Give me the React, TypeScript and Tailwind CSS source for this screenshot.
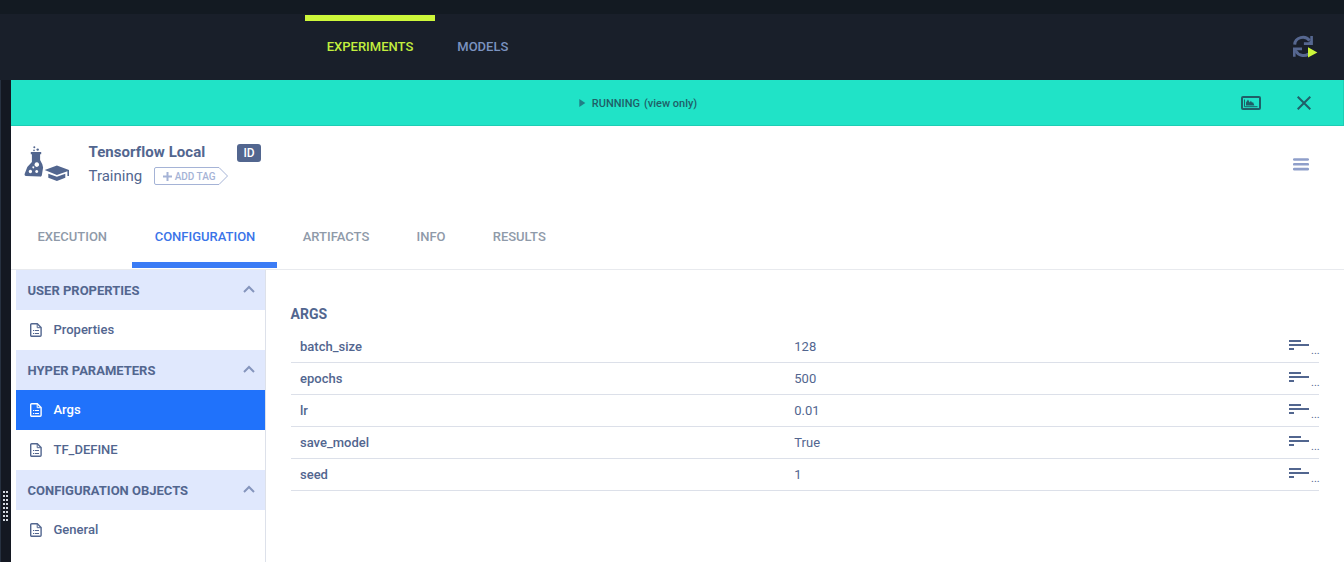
import React from "react";

type IconProps = { className?: string };

function RefreshIcon() {
  return (
    <svg width="26" height="24" viewBox="0 0 26 24" fill="none">
      <path d="M2.7 10.600A8.200 7.600 0 0 1 17.600 6.600" stroke="#566790" strokeWidth="3" />
      <path d="M20.900 2v9h-9V8.300h4.700l1.700-1.600V2z" fill="#566790" />
      <path d="M4 17.200A8.200 7.400 0 0 0 16.500 20" stroke="#566790" strokeWidth="3" />
      <path d="M1 22.800V13.500h9v2.700H5.300l-1.700 1.700v4.900z" fill="#566790" />
      <path d="M16 13.300v10.200l9.400-5.100z" fill="#cdf73a" />
    </svg>
  );
}

function PreviewIcon() {
  return (
    <svg width="20" height="14" viewBox="0 0 20 14" fill="none">
      <rect x="1" y="1" width="18" height="12" rx="1" stroke="#1f5f68" strokeWidth="2" />
      <path d="M3.5 3.5v7.2h13" stroke="#1f5f68" />
      <path d="M5 9.4V6.6l2-3.100 1.700 3.100 1.200-1.900 1.200 2 .9-.8 1.400 3.500z" fill="#1f5f68" />
    </svg>
  );
}

function ExperimentIcon() {
  return (
    <svg width="46" height="36" viewBox="0 0 46 36" fill="#52668f">
      <circle cx="10.300" cy="1.300" r="1" />
      <circle cx="13.700" cy="3.600" r="1.200" />
      <circle cx="10" cy="4.400" r=".8" />
      <path
        fillRule="evenodd"
        d="M6.800 6h10.400v2.300h-1.100v5.700l2.200 4.200.8 3.400-1.200 7.400c-.3 1.300-1 1.800-2.200 1.600L2 29.900C.8 29.800.3 28.900.7 27.700L3.300 21l4.600-5V8.300H6.800zM12.800 16.300a2.300 2.300 0 1 0 .01 0zM6.400 23.800a1.700 1.700 0 1 0 .01 0zM12.700 24.100a1.500 1.500 0 1 0 .01 0zM9.300 20.300a1 1 0 1 0 .01 0z"
      />
      <path d="M20.700 24 32.900 19.600 45 24V30h-1.600v-4.800l-10.500 3.700z" />
      <path d="M24.300 27.700l8.600 3 8.400-3v4.100l-8.400 3.100-8.600-3.100z" />
    </svg>
  );
}

function FileIcon({ className }: IconProps) {
  return (
    <svg className={className} width="12" height="14" viewBox="0 0 12 14" fill="none" stroke="currentColor">
      <path d="M1.700.7h5.600l3.800 3.800v7.800a1 1 0 0 1-1 1H1.700a1 1 0 0 1-1-1V1.700a1 1 0 0 1 1-1z" strokeWidth="1.400" />
      <path d="M7.200 1v3.700h3.700" />
      <path d="M3 7.500h1.300M5 7.500h4M3 10.500h1.300M5 10.500h4" strokeWidth="1.200" />
    </svg>
  );
}

const groups = [
  { title: "USER PROPERTIES", items: ["Properties"] },
  { title: "HYPER PARAMETERS", items: ["Args", "TF_DEFINE"] },
  { title: "CONFIGURATION OBJECTS", items: ["General"] },
];

const args = [
  ["batch_size", "128"],
  ["epochs", "500"],
  ["lr", "0.01"],
  ["save_model", "True"],
  ["seed", "1"],
];

function TopNav() {
  return (
    <header className="flex h-20 shrink-0 flex-col bg-[#191f2a]">
      <div className="h-3.5 shrink-0 bg-[#131a22]" />
      <div className="flex flex-1 items-start pt-px text-[13px] font-medium">
        <div className="ml-[305px] h-[65px] w-[130px] border-t-6 border-[#cdf73a] pt-4 text-center leading-[20px] text-[#c3ee3e]">
          EXPERIMENTS
        </div>
        <div className="ml-[22.300px] pt-[22px] leading-[20px] text-[#7b93c0]">MODELS</div>
        <div className="mr-[26px] ml-auto pt-[19px]">
          <RefreshIcon />
        </div>
      </div>
    </header>
  );
}

function StatusBar() {
  return (
    <div className="flex h-[46px] shrink-0 items-center border-r border-b border-[#1dcdb4] bg-[#20e3c7] text-[#1f5f68]">
      <svg className="ml-[568px]" width="7" height="8" viewBox="0 0 7 8" fill="#217f86">
        <path d="M.3 0 6.300 4 .3 8z" />
      </svg>
      <div className="mt-[3px] ml-[5.800px] flex gap-1 text-[11px] leading-[16px] font-medium">
        <span>RUNNING</span>
        <span>(view only)</span>
      </div>
      <div className="mr-[32.500px] ml-auto flex items-center gap-[36px]">
        <PreviewIcon />
        <svg width="14" height="14" viewBox="0 0 14 14" stroke="#1f5f68" strokeWidth="2">
          <path d="M.7.700 13.300 13.300M13.300.700.7 13.300" />
        </svg>
      </div>
    </div>
  );
}

function ExperimentHeader() {
  return (
    <div className="flex h-[79px] shrink-0 items-start text-[#52668f]">
      <div className="mt-[20px] ml-[13px]">
        <ExperimentIcon />
      </div>
      <div className="mt-[14px] ml-[18.500px]">
        <div className="flex h-6 items-center">
          <span className="w-[116px] text-[15px] font-bold tracking-[0.06px] whitespace-nowrap">Tensorflow Local</span>
          <span className="mt-[2px] ml-[32.500px] flex h-[18px] w-6 items-center justify-center rounded-[3px] bg-[#52668f] text-[12px] leading-[18px] font-medium text-white">
            ID
          </span>
        </div>
        <div className="flex h-6 items-center">
          <span className="text-[15px]">Training</span>
          <div className="relative ml-[12px] flex h-[18px] w-[75px] items-center text-[#a5b3d6]">
            <svg className="absolute inset-0" width="75" height="18" viewBox="0 0 75 18" fill="none" stroke="currentColor">
              <path d="M2 .500h63L73.500 9 65 17.500H2A1.500 1.500 0 0 1 .500 16V2A1.500 1.500 0 0 1 2 .500z" />
            </svg>
            <svg className="ml-[9px]" width="9" height="9" viewBox="0 0 9 9" stroke="currentColor" strokeWidth="2">
              <path d="M4.500 0v9M0 4.500h9" />
            </svg>
            <span className="ml-[2.500px] text-[10px] font-medium whitespace-nowrap">ADD TAG</span>
          </div>
        </div>
      </div>
      <svg className="mt-[32px] mr-[35px] ml-auto" width="16" height="13" viewBox="0 0 16 13" stroke="#8f9fca" strokeWidth="2.600" strokeLinecap="round">
        <path d="M1.200 1.500h13.600M1.200 6.300h13.600M1.200 11.100h13.600" />
      </svg>
    </div>
  );
}

function Tabs() {
  const base = "flex h-[63px] items-center justify-center border-b-6 pt-[6px]";
  return (
    <nav className="flex h-[65px] shrink-0 border-b border-[#e8eaee] text-[13px] font-medium text-[#8f9aa9]">
      <div className={`${base} ml-[5px] w-[112px] border-transparent pl-[0.500px]`}>EXECUTION</div>
      <div className={`${base} ml-[4px] w-[145px] border-[#3b7cf5] pl-px text-[#3b74e8]`}>CONFIGURATION</div>
      <div className={`${base} ml-[3px] w-[112px] border-transparent`}>ARTIFACTS</div>
      <div className={`${base} w-[78px] border-transparent`}>INFO</div>
      <div className={`${base} w-[98px] border-transparent pl-[0.500px]`}>RESULTS</div>
    </nav>
  );
}

function Sidebar() {
  return (
    <aside className="w-[255px] shrink-0 border-r border-[#dde1ea] pl-[5px] text-[13px] text-[#52668f]">
      {groups.map((group) => (
        <section key={group.title}>
          <div className="flex h-10 items-center bg-[#e0e8fd] pt-0.5 pr-[10px] pl-[11.500px] font-bold">
            {group.title}
            <svg className="mb-[4px] ml-auto" width="12" height="8" viewBox="0 0 12 8" fill="none" stroke="#8595bd" strokeWidth="2">
              <path d="M1 7l5-5 5 5" />
            </svg>
          </div>
          {group.items.map((item) => (
            <div
              key={item}
              className={`flex h-10 items-center pl-[13.500px] font-medium ${item === "Args" ? "bg-[#2072fb] text-white" : ""}`}
            >
              <FileIcon />
              <span className="ml-3">{item}</span>
            </div>
          ))}
        </section>
      ))}
    </aside>
  );
}

function ArgsTable() {
  return (
    <main className="flex-1 pt-[34px] pr-[25px] pl-[25px] text-[#52668f]">
      <h2 className="-ml-[0.500px] h-[27px] text-sm leading-[20px] font-bold">ARGS</h2>
      {args.map(([name, value]) => (
        <div key={name} className="flex h-8 items-center border-b border-[#dce0e9] pl-[9px] text-[13px]">
          <span className="w-[494.300px] font-medium">{name}</span>
          <span>{value}</span>
          <div className="ml-auto flex h-full">
            <svg className="mt-[9px]" width="20" height="11" viewBox="0 0 20 11" fill="#52668f">
              <path d="M0 0h12v2H0zM0 4h20v2H0zM0 8h5v2H0z" />
            </svg>
            <span className="mt-[12px] ml-[2px] w-[8px] text-[11px] leading-[16px] whitespace-nowrap">...</span>
          </div>
        </div>
      ))}
    </main>
  );
}

function ResizeHandle() {
  return (
    <div className="flex w-[11px] shrink-0 border-l border-[#273141] bg-[#141822] pt-[411px]">
      <div className="ml-[2px] grid h-[30px] grid-cols-2 gap-x-px gap-y-[2px]">
        {Array.from({ length: 16 }, (_, i) => (
          <i key={i} className="block size-[2px] bg-[#d3d8e0]" />
        ))}
      </div>
    </div>
  );
}

export default function App() {
  return (
    <div className="flex h-[562px] w-[1344px] flex-col overflow-hidden bg-white font-[Roboto,sans-serif]">
      <TopNav />
      <div className="flex min-h-0 flex-1">
        <ResizeHandle />
        <div className="flex min-w-0 flex-1 flex-col">
          <StatusBar />
          <ExperimentHeader />
          <Tabs />
          <div className="flex min-h-0 flex-1">
            <Sidebar />
            <ArgsTable />
          </div>
        </div>
      </div>
    </div>
  );
}
